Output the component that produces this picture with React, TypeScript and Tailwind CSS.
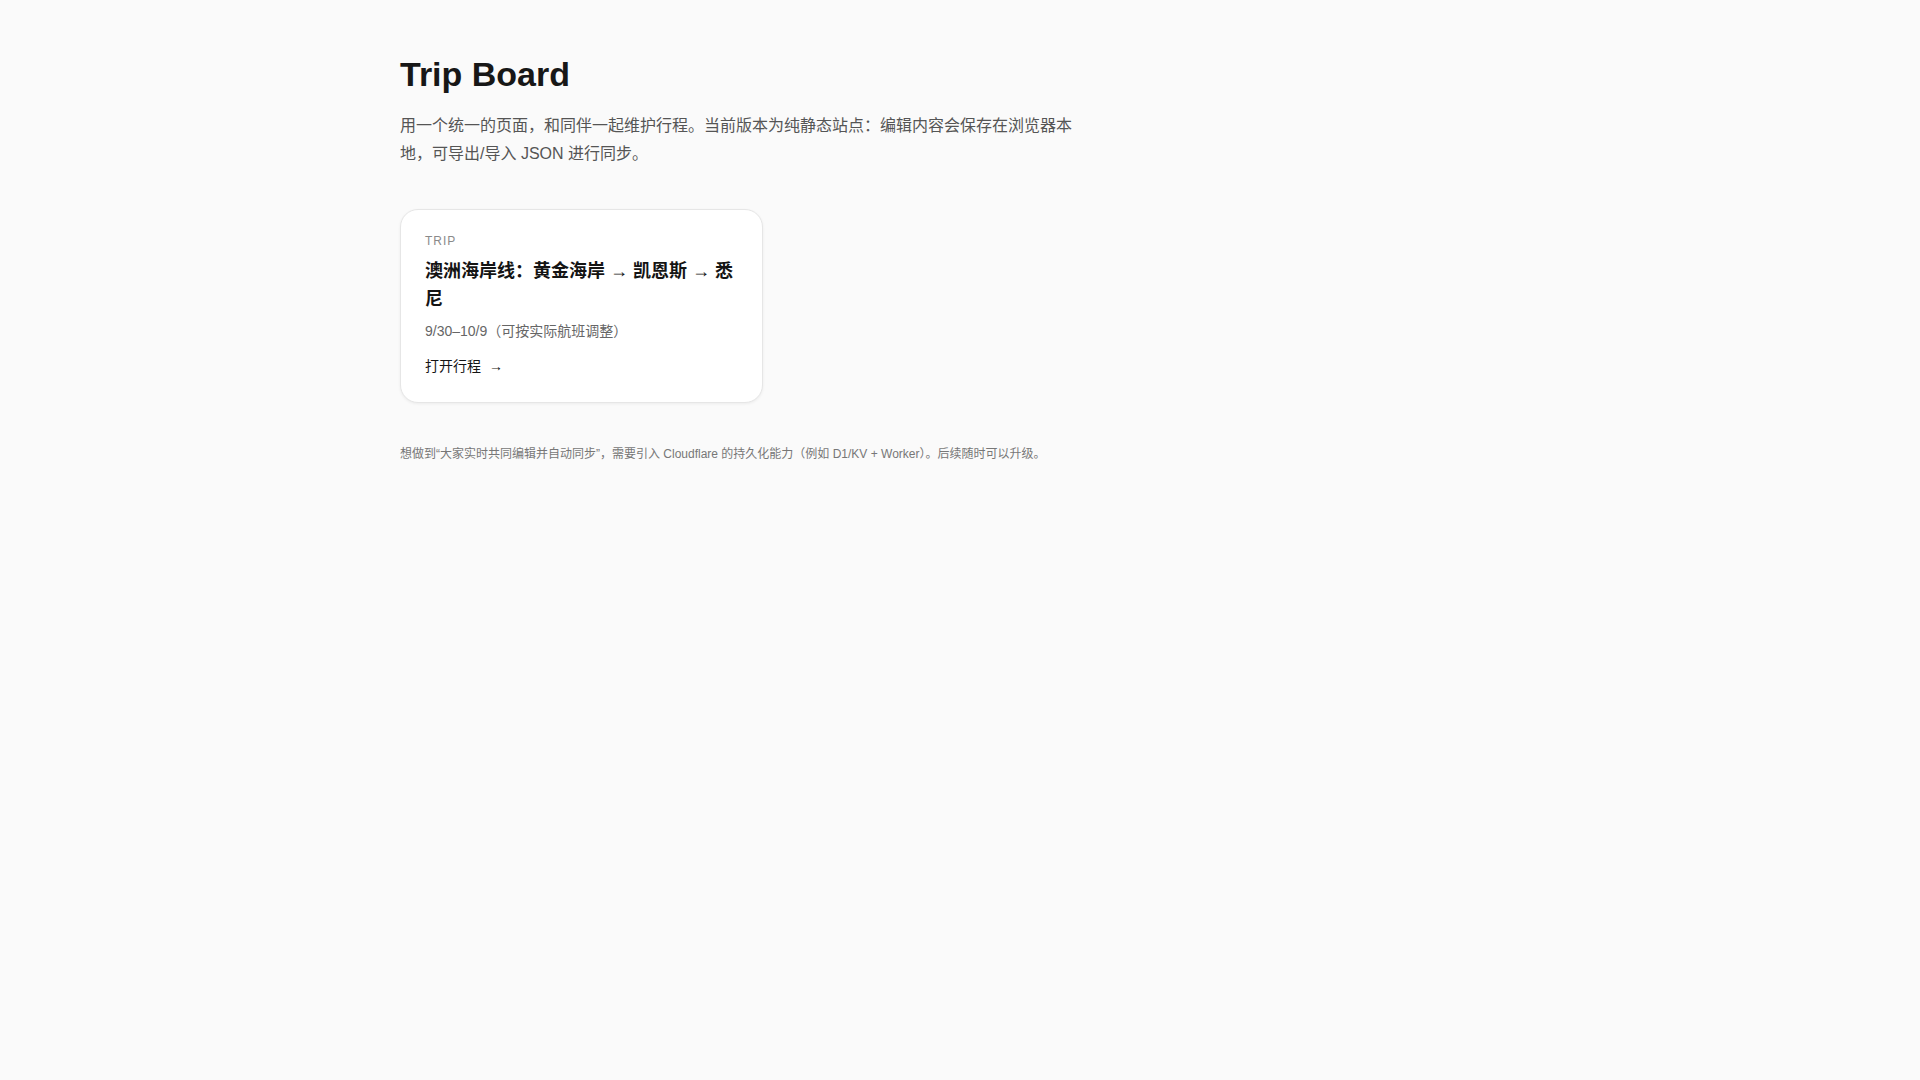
const trips = [
  {
    id: 'au-coast',
    tag: 'Trip',
    title: '澳洲海岸线：黄金海岸 → 凯恩斯 → 悉尼',
    dates: '9/30–10/9（可按实际航班调整）',
  },
];

function TripCard({ trip }: { trip: (typeof trips)[number] }) {
  return (
    <a
      href="#"
      className="block rounded-[18px] border border-[#e6e6e6] bg-white px-6 pt-[23px] pb-6 shadow-[0_1px_3px_rgba(0,0,0,0.06)]"
    >
      <div className="text-[12px] leading-4 uppercase tracking-[0.08em] text-[#8a8a8a]">{trip.tag}</div>
      <h2 className="mt-2 text-[18px] leading-[28px] font-bold text-[#141414]">{trip.title}</h2>
      <p className="mt-2 text-[14px] leading-5 text-[#666]">{trip.dates}</p>
      <div className="mt-[15px] inline-flex items-center gap-2 text-[14px] leading-5 text-[#141414]">
        <span>打开行程</span>
        <span>→</span>
      </div>
    </a>
  );
}

export default function App() {
  return (
    <div className="min-h-screen bg-[#fafafa] font-['Liberation_Sans','Noto_Sans_CJK_SC',sans-serif]">
      <main className="mx-auto max-w-[1120px] pt-[54px]">
        <h1 className="text-[34px] leading-[1.2] font-bold text-[#171717]">Trip Board</h1>
        <p className="mt-[17px] max-w-[680px] text-base leading-[28px] text-[#555]">
          用一个统一的页面，和同伴一起维护行程。当前版本为纯静态站点：编辑内容会保存在浏览器本地，可导出/导入 JSON 进行同步。
        </p>

        <section className="mt-[41px] grid grid-cols-3 gap-4">
          {trips.map((t) => (
            <TripCard key={t.id} trip={t} />
          ))}
        </section>

        <p className="mt-[43px] text-[12px] leading-4 text-[#777]">
          想做到“大家实时共同编辑并自动同步”，需要引入 Cloudflare 的持久化能力（例如 D1/KV + Worker）。后续随时可以升级。
        </p>
      </main>
    </div>
  );
}
